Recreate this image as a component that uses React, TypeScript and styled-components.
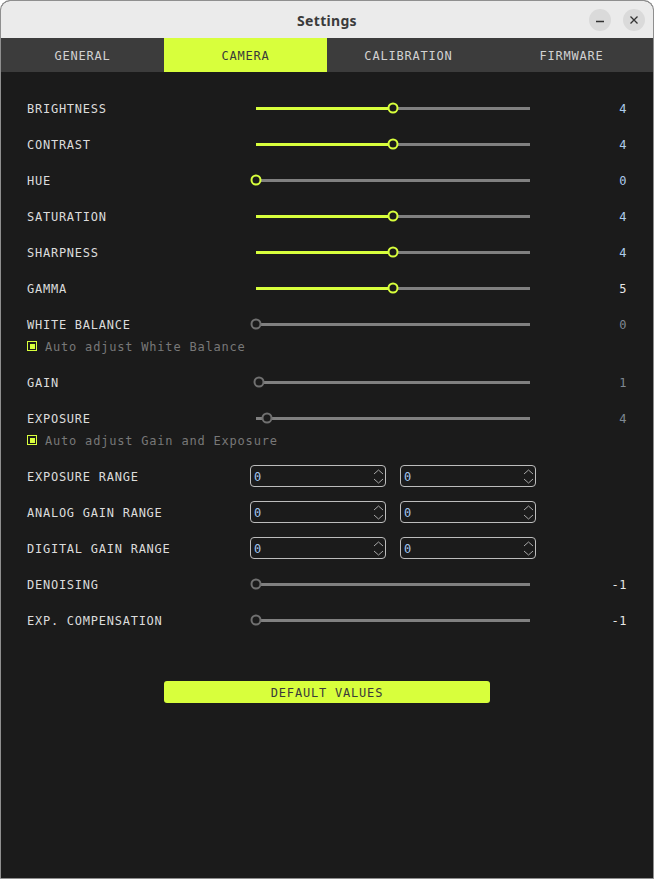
import React from "react";
import styled, { createGlobalStyle, css } from "styled-components";

const ACCENT = "#d8ff3c";
const MONO = `"DejaVu Sans Mono", "Liberation Mono", monospace`;

const GlobalStyle = createGlobalStyle`
  html, body {
    margin: 0;
    padding: 0;
    background: #ffffff;
  }
  * { box-sizing: border-box; }
`;

const Window = styled.div`
  width: 654px;
  height: 879px;
  border: 1px solid #8f8f8f;
  border-radius: 10px 10px 0 0;
  overflow: hidden;
  background: #1b1b1b;
  display: flex;
  flex-direction: column;
`;

const TitleBar = styled.header`
  height: 37px;
  flex: none;
  background: #ebebeb;
  display: grid;
  grid-template-columns: 1fr auto 1fr;
  align-items: center;
`;

const Title = styled.h1`
  grid-column: 2;
  margin: 0;
  padding-top: 1px;
  font-family: "Noto Sans", "DejaVu Sans", sans-serif;
  font-weight: 700;
  font-size: 14px;
  color: #3b3b3b;
  letter-spacing: 0.3px;
`;

const WindowControls = styled.div`
  grid-column: 3;
  justify-self: end;
  display: flex;
  gap: 12px;
  padding-right: 8px;
`;

const ControlButton = styled.button`
  width: 22px;
  height: 22px;
  border: none;
  border-radius: 50%;
  background: #dadada;
  padding: 0;
  display: flex;
  align-items: center;
  justify-content: center;
  color: #333;
`;

const TabBar = styled.nav`
  height: 34px;
  flex: none;
  background: #3c3c3c;
  display: grid;
  grid-template-columns: repeat(4, 1fr);
`;

const Tab = styled.div<{ $active?: boolean }>`
  display: flex;
  align-items: center;
  justify-content: center;
  padding-top: 2px;
  font-family: ${MONO};
  font-size: 12px;
  letter-spacing: 0.8px;
  color: #d2d2d2;
  ${(p) =>
    p.$active &&
    css`
      background: ${ACCENT};
      color: #3a3a3a;
    `}
`;

const Content = styled.main`
  flex: 1;
  padding: 18px 26px 0;
  display: flex;
  flex-direction: column;
`;

const Row = styled.div`
  height: 36px;
  display: grid;
  grid-template-columns: 223px 286px 1fr;
  align-items: center;
`;

const Label = styled.span`
  padding-top: 2px;
  font-family: ${MONO};
  font-size: 12px;
  letter-spacing: 0.75px;
  color: #dcdcdc;
`;

const Value = styled.span<{ $tone: "on" | "off" | "plain" }>`
  justify-self: end;
  padding-top: 2px;
  font-family: ${MONO};
  font-size: 12px;
  letter-spacing: 0.5px;
  color: ${(p) =>
    p.$tone === "on" ? "#aecbec" : p.$tone === "off" ? "#7f8892" : "#e8e8e8"};
`;

const SliderBox = styled.div`
  height: 12px;
  padding: 0 6px;
  display: flex;
  align-items: center;
`;

const Track = styled.div`
  flex: 1;
  height: 3px;
  background: #808080;
  position: relative;
`;

const Fill = styled.div`
  height: 100%;
  background: ${ACCENT};
`;

const Thumb = styled.div<{ $active?: boolean }>`
  position: absolute;
  top: 50%;
  width: 11px;
  height: 11px;
  border-radius: 50%;
  background: #1b1b1b;
  border: 2.5px solid ${(p) => (p.$active ? ACCENT : "#707070")};
  transform: translate(-50%, -50%);
`;

const CheckRow = styled.label`
  height: 12px;
  margin: -2px 0 12px;
  display: flex;
  align-items: center;
  gap: 8px;
  font-family: ${MONO};
  font-size: 12px;
  letter-spacing: 0.8px;
  color: #787878;
`;

const CheckText = styled.span`
  padding-top: 2px;
`;

const CheckBox = styled.span`
  width: 10px;
  height: 10px;
  border: 1px solid ${ACCENT};
  display: flex;
  align-items: center;
  justify-content: center;
  &::after {
    content: "";
    width: 5px;
    height: 5px;
    background: ${ACCENT};
  }
`;

const SpinPair = styled.div`
  display: flex;
  gap: 14px;
`;

const SpinBox = styled.div`
  width: 136px;
  height: 22px;
  border: 1px solid #bdbdbd;
  border-radius: 4px;
  display: flex;
  align-items: center;
  padding: 0 1px 0 3px;
`;

const SpinText = styled.span`
  flex: 1;
  padding-top: 2px;
  font-family: ${MONO};
  font-size: 12px;
  color: #a3c6f0;
`;

const DefaultButton = styled.button`
  align-self: center;
  margin-top: 43px;
  width: 326px;
  height: 22px;
  border: none;
  border-radius: 3px;
  background: ${ACCENT};
  font-family: ${MONO};
  font-size: 12px;
  letter-spacing: 0.8px;
  color: #3a3a3a;
  padding: 2px 0 0;
`;

type SliderProps = { value: number; min: number; max: number; active?: boolean };

function Slider({ value, min, max, active }: SliderProps) {
  const pct = ((value - min) / (max - min)) * 100;
  return (
    <SliderBox>
      <Track>
        {active && <Fill style={{ width: `${pct}%` }} />}
        <Thumb $active={active} style={{ left: `${pct}%` }} />
      </Track>
    </SliderBox>
  );
}

function Chevrons() {
  return (
    <svg width="11" height="15" viewBox="0 0 11 15" fill="none" stroke="#a8a8a8" strokeWidth="1">
      <path d="M1 5 L5.5 1 L10 5" />
      <path d="M1 10 L5.5 14 L10 10" />
    </svg>
  );
}

function Spin({ value }: { value: number }) {
  return (
    <SpinBox>
      <SpinText>{value}</SpinText>
      <Chevrons />
    </SpinBox>
  );
}

type SliderRow = {
  label: string;
  value: number;
  min: number;
  max: number;
  active?: boolean;
  tone: "on" | "off" | "plain";
};

const imageRows: SliderRow[] = [
  { label: "BRIGHTNESS", value: 4, min: 0, max: 8, active: true, tone: "on" },
  { label: "CONTRAST", value: 4, min: 0, max: 8, active: true, tone: "on" },
  { label: "HUE", value: 0, min: 0, max: 8, active: true, tone: "on" },
  { label: "SATURATION", value: 4, min: 0, max: 8, active: true, tone: "on" },
  { label: "SHARPNESS", value: 4, min: 0, max: 8, active: true, tone: "on" },
  { label: "GAMMA", value: 5, min: 1, max: 9, active: true, tone: "plain" },
];

function SliderLine({ row }: { row: SliderRow }) {
  return (
    <Row>
      <Label>{row.label}</Label>
      <Slider value={row.value} min={row.min} max={row.max} active={row.active} />
      <Value $tone={row.tone}>{row.value}</Value>
    </Row>
  );
}

function RangeLine({ label }: { label: string }) {
  return (
    <Row>
      <Label>{label}</Label>
      <SpinPair>
        <Spin value={0} />
        <Spin value={0} />
      </SpinPair>
    </Row>
  );
}

export default function App() {
  return (
    <>
      <GlobalStyle />
      <Window>
        <TitleBar>
          <Title>Settings</Title>
          <WindowControls>
            <ControlButton aria-label="Minimize">
              <svg width="10" height="10" viewBox="0 0 10 10">
                <path d="M1 6.5 H9" stroke="#333" strokeWidth="1.3" />
              </svg>
            </ControlButton>
            <ControlButton aria-label="Close">
              <svg width="10" height="10" viewBox="0 0 10 10">
                <path d="M1.5 1.5 L8.5 8.5 M8.5 1.5 L1.5 8.5" stroke="#333" strokeWidth="1.3" />
              </svg>
            </ControlButton>
          </WindowControls>
        </TitleBar>
        <TabBar>
          <Tab>GENERAL</Tab>
          <Tab $active>CAMERA</Tab>
          <Tab>CALIBRATION</Tab>
          <Tab>FIRMWARE</Tab>
        </TabBar>
        <Content>
          {imageRows.map((r) => (
            <SliderLine key={r.label} row={r} />
          ))}
          <SliderLine row={{ label: "WHITE BALANCE", value: 0, min: 0, max: 100, tone: "off" }} />
          <CheckRow>
            <CheckBox />
            <CheckText>Auto adjust White Balance</CheckText>
          </CheckRow>
          <SliderLine row={{ label: "GAIN", value: 1, min: 0, max: 100, tone: "off" }} />
          <SliderLine row={{ label: "EXPOSURE", value: 4, min: 0, max: 100, tone: "off" }} />
          <CheckRow>
            <CheckBox />
            <CheckText>Auto adjust Gain and Exposure</CheckText>
          </CheckRow>
          <RangeLine label="EXPOSURE RANGE" />
          <RangeLine label="ANALOG GAIN RANGE" />
          <RangeLine label="DIGITAL GAIN RANGE" />
          <SliderLine row={{ label: "DENOISING", value: -1, min: -1, max: 8, tone: "plain" }} />
          <SliderLine row={{ label: "EXP. COMPENSATION", value: -1, min: -1, max: 8, tone: "plain" }} />
          <DefaultButton>DEFAULT VALUES</DefaultButton>
        </Content>
      </Window>
    </>
  );
}
